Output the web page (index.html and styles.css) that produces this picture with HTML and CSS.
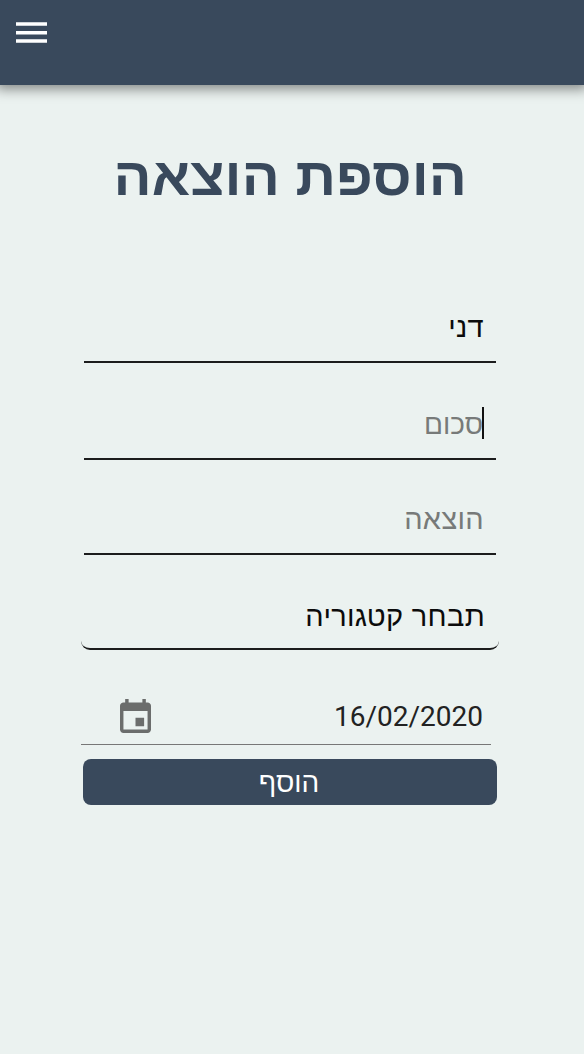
FILE: index.html
```html
<!DOCTYPE html>
<html lang="he">
<head>
<meta charset="utf-8">
<title>הוספת הוצאה</title>
<link rel="stylesheet" href="styles.css">
</head>
<body>
<header class="bar">
  <svg class="menu" viewBox="0 0 31 21"><path d="M0 .3h31v3.500H0zM0 9h31v3.500H0zM0 17.300h31v3.500H0z" fill="#fff"/></svg>
</header>
<main class="page">
  <h1 class="title"><span>הוספת הוצאה</span></h1>
  <form class="form">
    <div class="field name"><span>דני</span></div>
    <div class="field amount hint"><span class="focused"><span class="placeholder">סכום</span></span></div>
    <div class="field expense hint"><span>הוצאה</span></div>
    <div class="field category"><span>תבחר קטגוריה</span></div>
    <div class="date">
      <svg class="calendar" viewBox="3 1 18 20" preserveAspectRatio="none"><path fill="#6b6d6c" d="M17 12h-5v5h5v-5zM16 1v2H8V1H6v2H5c-1.110 0-1.990.9-1.990 2L3 19c0 1.100.89 2 2 2h14c1.100 0 2-.9 2-2V5c0-1.100-.9-2-2-2h-1V1h-2zm3 18H5V8h14v11z"/></svg>
      <span dir="ltr">16/02/2020</span>
    </div>
    <button class="submit" type="button"><span>הוסף</span></button>
  </form>
</main>
</body>
</html>
```
FILE: styles.css
```css
* { box-sizing: border-box; }
body { margin: 0; height: 1054px; overflow: hidden; background: #ebf2f0; font-family: Roboto, "Noto Sans", sans-serif; }
.bar { height: 85px; padding: 22px 16px; background: #39495c; box-shadow: 0 0 12px 4px rgba(0,0,0,.45); }
.menu { display: block; width: 31px; height: 21px; }
.page { padding: 52px 81px 0; }
.title { display: flex; justify-content: center; margin: 0; padding-right: 4px; height: 80px; line-height: 80px; font-family: "Liberation Sans", sans-serif; font-size: 56px; font-weight: 700; color: #39495c; direction: rtl; white-space: nowrap; }
.title span { transform: scale(1.008, .94); }
.form { display: flex; flex-direction: column; padding-top: 75px; width: 418px; }
.field { direction: rtl; display: flex; align-items: center; font-family: "Liberation Sans", sans-serif; font-size: 29px; letter-spacing: .3px; line-height: 40px; color: #0b0b0b; border-bottom: 2px solid #1c1d1d; margin: 0 3px; padding: 0 12px; white-space: nowrap; }
.name { height: 71px; }
.amount { height: 97px; padding-top: 25px; font-size: 28px; letter-spacing: 0; }
.expense { height: 95px; padding-top: 25px; }
.category { height: 95px; padding: 28px 14px 0; margin: 0; border-radius: 0 0 9px 9px; }
.hint { color: #777a79; }
.focused { border-right: 2px solid #111; height: 32px; line-height: 35px; }
.placeholder { margin-right: -1px; }
.date { display: flex; justify-content: space-between; align-items: center; width: 410px; height: 95px; padding: 38px 8px 0 39px; border-bottom: 1px solid #777; font-size: 28px; color: #222; }
.calendar { width: 31px; height: 34px; }
.submit { margin: 14px 2px 0; height: 46px; padding: 2px 2px 0 0; border: 0; border-radius: 8px; background: #39495c; color: #fff; font: 28px "Liberation Sans", sans-serif; direction: rtl; }
```
